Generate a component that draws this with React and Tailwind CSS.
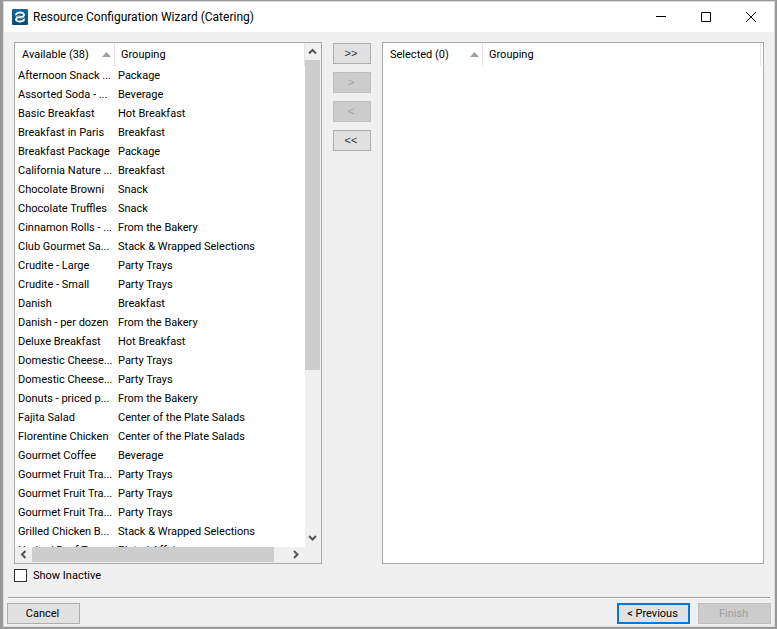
const items = [
  ["Afternoon Snack ...", "Package"],
  ["Assorted Soda - ...", "Beverage"],
  ["Basic Breakfast", "Hot Breakfast"],
  ["Breakfast in Paris", "Breakfast"],
  ["Breakfast Package", "Package"],
  ["California Nature ...", "Breakfast"],
  ["Chocolate Browni", "Snack"],
  ["Chocolate Truffles", "Snack"],
  ["Cinnamon Rolls - ...", "From the Bakery"],
  ["Club Gourmet Sa...", "Stack & Wrapped Selections"],
  ["Crudite - Large", "Party Trays"],
  ["Crudite - Small", "Party Trays"],
  ["Danish", "Breakfast"],
  ["Danish - per dozen", "From the Bakery"],
  ["Deluxe Breakfast", "Hot Breakfast"],
  ["Domestic Cheese...", "Party Trays"],
  ["Domestic Cheese...", "Party Trays"],
  ["Donuts - priced p...", "From the Bakery"],
  ["Fajita Salad", "Center of the Plate Salads"],
  ["Florentine Chicken", "Center of the Plate Salads"],
  ["Gourmet Coffee", "Beverage"],
  ["Gourmet Fruit Tra...", "Party Trays"],
  ["Gourmet Fruit Tra...", "Party Trays"],
  ["Gourmet Fruit Tra...", "Party Trays"],
  ["Grilled Chicken B...", "Stack & Wrapped Selections"],
  ["Herbed Beef Te...", "Plated Affairs"],
];

function Chevron({ d }) {
  return (
    <svg viewBox="0 0 9 9" className="size-[9px]" fill="none" stroke="#555" strokeWidth="2" aria-hidden="true">
      <path d={d} />
    </svg>
  );
}

function ItemTable({ title, rows }) {
  return (
    <table className="w-full table-fixed border-separate border-spacing-0 text-left">
      <colgroup>
        <col className="w-[100px]" />
        <col />
      </colgroup>
      <thead>
        <tr className="h-[23px]">
          <th scope="col" className="border-r border-[#e5e5e5] py-0 pr-[3px] pl-[7px] font-normal">
            <span className="flex items-center justify-between">
              {title}
              <svg viewBox="0 0 9 5" className="h-[5px] w-[9px]" fill="#a0a0a0" aria-hidden="true">
                <path d="M4.5 0 9 5H0z" />
              </svg>
            </span>
          </th>
          <th scope="col" className="border-r border-[#e5e5e5] p-0 pl-[6px] font-normal">Grouping</th>
        </tr>
      </thead>
      <tbody>
        {rows.map(([name, group], i) => (
          <tr key={i} className="h-[19px]">
            <td className="overflow-hidden py-0 pr-0 pl-[3px] whitespace-nowrap">{name}</td>
            <td className="py-0 pr-0 pl-[3px] whitespace-nowrap">{group}</td>
          </tr>
        ))}
      </tbody>
    </table>
  );
}

const buttonBase =
  "flex h-[21px] items-center justify-center border border-[#adadad] bg-[#e1e1e1] pr-[2px] disabled:border-[#bfbfbf] disabled:bg-[#cccccc] disabled:text-[#a0a0a0]";

const moveButton = `${buttonBase} w-[38px] font-['Liberation_Sans',Arial,sans-serif] text-[#333]`;

export default function App() {
  return (
    <div className="flex h-screen flex-col bg-[#999] pt-px pr-[2px] pb-[2px] pl-[3px] font-['Roboto',sans-serif] text-[11px] leading-[15px] text-black">
      <main className="flex min-h-0 flex-1 flex-col border border-[#dcdcdc] bg-[#f0f0f0]">
        <header className="flex h-[30px] shrink-0 items-center bg-white pr-px pl-2">
          <svg viewBox="0 0 16 16" className="size-4" aria-hidden="true">
            <defs>
              <linearGradient id="logo" x1="0" y1="0" x2="0" y2="1">
                <stop offset="0" stopColor="#0a69a0" />
                <stop offset="1" stopColor="#124a78" />
              </linearGradient>
            </defs>
            <rect width="16" height="16" rx="1" fill="url(#logo)" />
            <path
              d="M3.6 5.8C4.8 3.6 8.4 2.8 10.8 4C12.8 5.2 12.2 7 10.2 7.6L5.8 8.6C3.6 9.2 3.4 11 5.2 12C7.6 13.2 11.2 12.4 12.4 10.2"
              fill="none" stroke="#fff" strokeWidth="1.9"
            />
            <path d="M3.4 6.6C4.2 8 5.8 7.2 8 6.7M12.6 9.4C11.8 8 10.2 8.8 8 9.3" fill="none" stroke="#b9d6e8" strokeWidth="1" />
          </svg>
          <h1 className="ml-[5px] flex-1 text-[12px]">Resource Configuration Wizard (Catering)</h1>
          <button type="button" aria-label="Minimize" className="flex w-[45px] justify-center">
            <svg viewBox="0 0 10 10" className="size-[10px]" stroke="#000"><path d="M0 4.5h10" /></svg>
          </button>
          <button type="button" aria-label="Maximize" className="flex w-[45px] justify-center">
            <svg viewBox="0 0 10 10" className="size-[10px]" fill="none" stroke="#000"><path d="M.5.5h9v9h-9z" /></svg>
          </button>
          <button type="button" aria-label="Close" className="flex w-[45px] justify-center">
            <svg viewBox="0 0 10 10" className="size-[10px]" stroke="#000"><path d="M0 0l10 10M10 0L0 10" /></svg>
          </button>
        </header>

        <div className="flex min-h-0 flex-1 px-[10px] pt-[10px]">
          <section className="flex w-[308px] flex-col border border-[#a9a9ae] bg-[#f0f0f0]">
            <div className="flex min-h-0 flex-1">
              <div className="min-w-0 flex-1 overflow-hidden bg-white">
                <ItemTable title="Available (38)" rows={items} />
              </div>
              <div className="mr-px flex w-[15px] flex-col items-center">
                <div className="flex h-[17px] items-center"><Chevron d="M1 6.5 4.5 3 8 6.5" /></div>
                <div className="flex w-full flex-1 flex-col">
                  <div className="h-[66%] bg-[#cdcdcd]" />
                </div>
                <div className="flex h-[17px] items-center"><Chevron d="M1 2 4.5 5.5 8 2" /></div>
              </div>
            </div>
            <div className="mr-[17px] mb-px flex h-[15px] items-center">
              <div className="flex w-[17px] justify-center"><Chevron d="M6.5 1 3 4.5 6.5 8" /></div>
              <div className="flex h-full flex-1">
                <div className="w-[95%] bg-[#cdcdcd]" />
              </div>
              <div className="flex w-[17px] justify-center"><Chevron d="M3 1 6.5 4.5 3 8" /></div>
            </div>
          </section>

          <div className="flex w-[60px] flex-col items-center gap-2 pt-px">
            <button type="button" className={moveButton}>&gt;&gt;</button>
            <button type="button" disabled className={moveButton}>&gt;</button>
            <button type="button" disabled className={moveButton}>&lt;</button>
            <button type="button" className={moveButton}>&lt;&lt;</button>
          </div>

          <section className="min-w-0 flex-1 border border-[#a9a9ae] bg-white pr-[2px]">
            <ItemTable title="Selected (0)" rows={[]} />
          </section>
        </div>

        <label className="flex h-[33px] items-start gap-[6px] px-[10px] pt-1">
          <input type="checkbox" className="mt-px size-[13px] appearance-none border border-[#333] bg-white" />
          Show Inactive
        </label>

        <footer className="px-[3px] pb-[2px]">
          <hr className="mx-px h-[2px] border-t border-b border-t-[#a0a0a0] border-b-white" />
          <div className="flex gap-2 pt-1">
            <button type="button" className={`${buttonBase} mr-auto w-[73px]`}>Cancel</button>
            <button type="button" className={`${buttonBase} w-[73px] outline-2 -outline-offset-2 outline-[#0078d7]`}>&lt; Previous</button>
            <button type="button" disabled className={`${buttonBase} w-[73px]`}>Finish</button>
          </div>
        </footer>
      </main>
    </div>
  );
}
